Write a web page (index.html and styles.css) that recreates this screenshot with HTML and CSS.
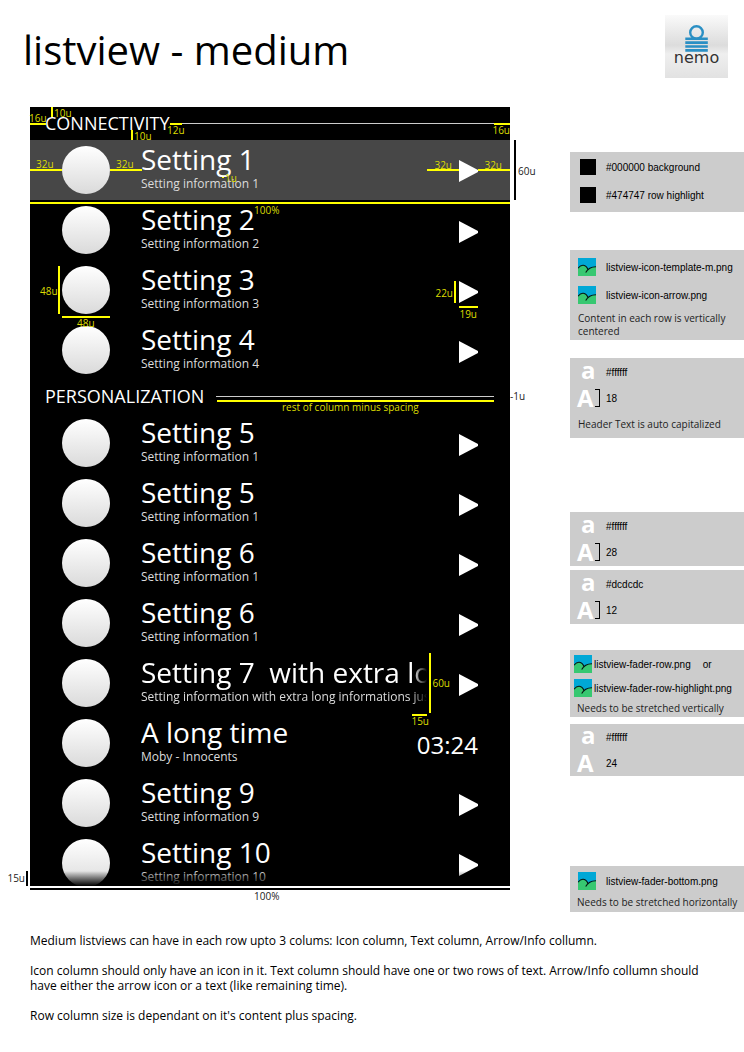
FILE: index.html
```html
<!DOCTYPE html>
<html lang="en">
<head>
<meta charset="utf-8">
<meta name="viewport" content="width=device-width, initial-scale=1">
<title>listview - medium</title>
<link rel="stylesheet" href="styles.css">
</head>
<body>
<svg class="defs" aria-hidden="true">
  <symbol id="picture" viewBox="0 0 18 18">
    <rect width="18" height="18" fill="#00a8d6"/>
    <path d="M0 10.500C3 6 8 6 10 12C12 10 15 8.700 18 8.700V18H0z" fill="#37c871"/>
    <path d="M0 10.300C3 6 8 6 10.200 12.200M7.700 14.600C9.500 11 13 8.700 18 8.700" fill="none" stroke="#06140f" stroke-width="1.100"/>
  </symbol>
  <symbol id="arrow" viewBox="0 0 19 22">
    <path d="M0 0L19 10V12L0 22z" fill="#fff"/>
  </symbol>
</svg>

<header class="page-header">
  <h1 class="page-title">listview - medium</h1>
  <svg class="logo" viewBox="0 0 63 63" role="img" aria-label="nemo">
    <defs>
      <linearGradient id="plate" x1="0" y1="0" x2="0" y2="1">
        <stop offset="0" stop-color="#fafafa"/>
        <stop offset=".48" stop-color="#dcdcdc"/>
        <stop offset=".62" stop-color="#efefef"/>
        <stop offset="1" stop-color="#e2e2e2"/>
      </linearGradient>
    </defs>
    <rect width="63" height="63" fill="url(#plate)"/>
    <circle cx="31.500" cy="17.500" r="6.300" fill="none" stroke="#2a8fc4" stroke-width="2.400"/>
    <path d="M20.300 23.700H42.800M20.300 27.600H42.800M20.300 31.500H42.800M20.300 35.400H42.800" stroke="#2a8fc4" stroke-width="2.600"/>
    <text class="logo-word" x="31.500" y="48" text-anchor="middle">nemo</text>
  </svg>
</header>

<main class="board">
  <section class="listview">
    <div class="section">
      <h2 class="section-title">CONNECTIVITY</h2><span class="rule"></span>
      <i class="bar h1-tick-top"></i><span class="note h1-top">10u</span>
      <i class="bar h1-line-left"></i><span class="note h1-left">16u</span>
      <i class="bar h1-line-gap"></i><span class="note h1-gap">12u</span>
      <i class="bar h1-tick-bottom"></i><span class="note h1-bottom">10u</span>
      <i class="bar h1-line-right"></i><span class="note h1-right">16u</span>
    </div>
    <div class="row highlight">
      <span class="icon"></span>
      <div class="text"><div class="title">Setting 1</div><div class="info">Setting information 1</div></div>
      <svg class="arrow"><use href="#arrow"/></svg>
      <i class="bar r1-line-a"></i><span class="note r1-a">32u</span>
      <i class="bar r1-line-b"></i><span class="note r1-b">32u</span>
      <i class="bar r1-line-c"></i><span class="note r1-c">32u</span>
      <i class="bar r1-line-d"></i><span class="note r1-d">32u</span>
      <i class="bar r1-dot"></i><span class="note r1-one">1u</span>
      <i class="bar r1-line-full"></i><span class="note r1-full">100%</span>
      <i class="bar dark r1-height"></i><span class="note dark-note r1-height-note">60u</span>
    </div>
    <div class="row">
      <span class="icon"></span>
      <div class="text"><div class="title">Setting 2</div><div class="info">Setting information 2</div></div>
      <svg class="arrow"><use href="#arrow"/></svg>
    </div>
    <div class="row">
      <span class="icon"></span>
      <div class="text"><div class="title">Setting 3</div><div class="info">Setting information 3</div></div>
      <svg class="arrow"><use href="#arrow"/></svg>
      <i class="bar r3-icon-h"></i><span class="note r3-icon-h-note">48u</span>
      <i class="bar r3-icon-w"></i><span class="note r3-icon-w-note">48u</span>
      <i class="bar r3-arrow-h"></i><span class="note r3-arrow-h-note">22u</span>
      <i class="bar r3-arrow-w"></i><span class="note r3-arrow-w-note">19u</span>
    </div>
    <div class="row">
      <span class="icon"></span>
      <div class="text"><div class="title">Setting 4</div><div class="info">Setting information 4</div></div>
      <svg class="arrow"><use href="#arrow"/></svg>
    </div>
    <div class="section">
      <h2 class="section-title">PERSONALIZATION</h2><span class="rule"></span>
      <i class="bar h2-line"></i><span class="note h2-rest">rest of column minus spacing</span>
      <span class="note dark-note h2-one">-1u</span>
    </div>
    <div class="row">
      <span class="icon"></span>
      <div class="text"><div class="title">Setting 5</div><div class="info">Setting information 1</div></div>
      <svg class="arrow"><use href="#arrow"/></svg>
    </div>
    <div class="row">
      <span class="icon"></span>
      <div class="text"><div class="title">Setting 5</div><div class="info">Setting information 1</div></div>
      <svg class="arrow"><use href="#arrow"/></svg>
    </div>
    <div class="row">
      <span class="icon"></span>
      <div class="text"><div class="title">Setting 6</div><div class="info">Setting information 1</div></div>
      <svg class="arrow"><use href="#arrow"/></svg>
    </div>
    <div class="row">
      <span class="icon"></span>
      <div class="text"><div class="title">Setting 6</div><div class="info">Setting information 1</div></div>
      <svg class="arrow"><use href="#arrow"/></svg>
    </div>
    <div class="row">
      <span class="icon"></span>
      <div class="text fade"><div class="title">Setting 7  with extra lo</div><div class="info">Setting information with extra long informations jus</div></div>
      <svg class="arrow"><use href="#arrow"/></svg>
      <i class="bar r7-height"></i><span class="note r7-height-note">60u</span>
      <i class="bar r7-fade"></i><span class="note r7-fade-note">15u</span>
    </div>
    <div class="row">
      <span class="icon"></span>
      <div class="text"><div class="title">A long time</div><div class="info">Moby - Innocents</div></div>
      <time class="remaining">03:24</time>
    </div>
    <div class="row">
      <span class="icon"></span>
      <div class="text"><div class="title">Setting 9</div><div class="info">Setting information 9</div></div>
      <svg class="arrow"><use href="#arrow"/></svg>
    </div>
    <div class="row last">
      <span class="icon"></span>
      <div class="text"><div class="title">Setting 10</div><div class="info">Setting information 10</div></div>
      <svg class="arrow"><use href="#arrow"/></svg>
    </div>
    <i class="bar dark list-fade"></i><span class="note dark-note list-fade-note">15u</span>
    <i class="bar dark list-width"></i><span class="note dark-note list-width-note">100%</span>
  </section>

  <aside class="specs">
    <div class="panel">
      <div class="spec"><span class="swatch"></span><span>#000000 background</span></div>
      <div class="spec"><span class="swatch"></span><span>#474747 row highlight</span></div>
    </div>
    <div class="panel files">
      <div class="spec"><svg class="picture"><use href="#picture"/></svg><span>listview-icon-template-m.png</span></div>
      <div class="spec"><svg class="picture"><use href="#picture"/></svg><span>listview-icon-arrow.png</span></div>
      <p class="remark">Content in each row is vertically centered</p>
    </div>
    <div class="panel type header-type">
      <div class="spec"><span class="glyph lower">a</span><span>#ffffff</span></div>
      <div class="spec"><span class="glyph">A<i class="bracket"></i></span><span>18</span></div>
      <p class="remark">Header Text is auto capitalized</p>
    </div>
    <div class="panel type title-type">
      <div class="spec"><span class="glyph lower">a</span><span>#ffffff</span></div>
      <div class="spec"><span class="glyph">A<i class="bracket"></i></span><span>28</span></div>
    </div>
    <div class="panel type info-type">
      <div class="spec"><span class="glyph lower">a</span><span>#dcdcdc</span></div>
      <div class="spec"><span class="glyph">A<i class="bracket"></i></span><span>12</span></div>
    </div>
    <div class="panel faders">
      <div class="spec"><svg class="picture"><use href="#picture"/></svg><span>listview-fader-row.png</span><span class="or">or</span></div>
      <div class="spec"><svg class="picture"><use href="#picture"/></svg><span>listview-fader-row-highlight.png</span></div>
      <p class="remark">Needs to be stretched vertically</p>
    </div>
    <div class="panel type time-type">
      <div class="spec"><span class="glyph lower">a</span><span>#ffffff</span></div>
      <div class="spec"><span class="glyph">A</span><span>24</span></div>
    </div>
    <div class="panel bottom-fader">
      <div class="spec"><svg class="picture"><use href="#picture"/></svg><span>listview-fader-bottom.png</span></div>
      <p class="remark">Needs to be stretched horizontally</p>
    </div>
  </aside>
</main>

<section class="description">
  <p>Medium listviews can have in each row upto 3 colums: Icon column, Text column, Arrow/Info collumn.</p>
  <p>Icon column should only have an icon in it. Text column should have one or two rows of text. Arrow/Info collumn should have either the arrow icon or a text (like remaining time).</p>
  <p>Row column size is dependant on it's content plus spacing.</p>
</section>
</body>
</html>
```
FILE: styles.css
```css
* { box-sizing: border-box; }

body {
  margin: 0;
  background: #fff;
  color: #000;
  font-family: "Open Sans", "Noto Sans", sans-serif;
}

h1, h2, p { margin: 0; font-weight: 400; }
.defs { display: none; }

.page-header {
  display: flex;
  justify-content: space-between;
  align-items: flex-start;
  padding: 15px 16px 29px 23px;
}
.page-title { padding-top: 8px; font-size: 40px; line-height: 54px; }
.logo { width: 63px; height: 63px; }
.logo-word { font-family: "DejaVu Sans", sans-serif; font-size: 16px; fill: #333; }

.board {
  display: grid;
  grid-template-columns: minmax(0, 480px) minmax(174px, 1fr);
  gap: 60px;
  align-items: start;
  padding-left: 30px;
}

/* List */
.listview { position: relative; background: #000; color: #fff; }

.section {
  position: relative;
  display: flex;
  align-items: center;
  gap: 12px;
  height: 33px;
  padding: 0 16px 0 15px;
}
.section-title { font-size: 18px; line-height: 25px; }
.rule { flex: 1; height: 1px; background: #ccc; }

.row {
  position: relative;
  display: grid;
  grid-template-columns: 48px minmax(0, 1fr) auto;
  column-gap: 32px;
  height: 60px;
  padding: 0 32px;
}
.highlight { background: #474747; }
.icon {
  align-self: start;
  height: 48px;
  margin-top: 6px;
  border-radius: 50%;
  background: linear-gradient(#fff, #dadada);
}
.text { margin-left: -1px; padding-top: 3px; white-space: pre; overflow: hidden; }
.title { font-size: 28px; line-height: 32px; }
.info { font-size: 12px; line-height: 18px; color: #dcdcdc; }
.fade { mask-image: linear-gradient(to left, transparent, #000 15px); }
.arrow { width: 19px; height: 22px; margin-top: 21px; }
.highlight .arrow { margin-top: 20px; z-index: 2; }
.remaining { padding-top: 16px; font-size: 24px; line-height: 32px; }
.last { height: 53px; overflow: hidden; }
.last::after {
  content: "";
  position: absolute;
  inset: auto 0 0 0;
  height: 15px;
  background: linear-gradient(transparent, #000);
}

/* Measurements laid over the list */
.bar { position: absolute; z-index: 1; width: 2px; height: 2px; background: #ff0; }
.note {
  position: absolute;
  z-index: 1;
  font-size: 10px;
  line-height: 14px;
  white-space: nowrap;
  color: #dddd00;
}
.dark { background: #000; }
.dark-note { color: #222; }

.h1-tick-top { left: 21px; top: 0; height: 10px; }
.h1-top { left: 24px; top: -1px; }
.h1-line-left { left: 0; top: 16px; width: 16px; }
.h1-left { left: -1px; top: 4px; }
.h1-line-gap { left: 140px; top: 16px; width: 12px; }
.h1-gap { left: 137px; top: 16px; }
.h1-tick-bottom { left: 101px; top: 23px; height: 10px; }
.h1-bottom { left: 104px; top: 22px; }
.h1-line-right { right: 0; top: 16px; width: 16px; }
.h1-right { right: 0; top: 16px; }

.r1-line-a { left: 0; top: 29px; width: 32px; }
.r1-a { left: 6px; top: 17px; }
.r1-line-b { left: 80px; top: 29px; width: 32px; }
.r1-b { left: 86px; top: 17px; }
.r1-line-c { right: 51px; top: 29px; width: 32px; }
.r1-c { right: 58px; top: 18px; }
.r1-line-d { right: 0; top: 29px; width: 32px; }
.r1-d { right: 8px; top: 18px; }
.r1-dot { left: 192px; top: 37px; height: 1px; }
.r1-one { left: 195px; top: 31px; }
.r1-line-full { left: 0; top: 62px; width: 100%; }
.r1-full { left: 224px; top: 63px; }
.r1-height { right: -6px; top: 0; height: 60px; }
.r1-height-note { left: calc(100% + 8px); top: 24px; }

.r3-icon-h { left: 28px; top: 6px; height: 48px; }
.r3-icon-h-note { left: 10px; top: 24px; }
.r3-icon-w { left: 32px; top: 56px; width: 48px; }
.r3-icon-w-note { left: 47px; top: 56px; }
.r3-arrow-h { right: 54px; top: 21px; height: 22px; }
.r3-arrow-h-note { right: 57px; top: 26px; }
.r3-arrow-w { right: 32px; top: 46px; width: 19px; }
.r3-arrow-w-note { right: 33px; top: 47px; }

.h2-line { left: 187px; right: 16px; top: 20px; width: auto; }
.h2-rest { left: 252px; top: 20px; }
.h2-one { left: 100%; top: 9px; }

.r7-height { right: 79px; top: 0; height: 60px; }
.r7-height-note { right: 60px; top: 23px; }
.r7-fade { right: 83px; top: 61px; width: 15px; }
.r7-fade-note { right: 81px; top: 61px; }

.list-fade { left: -4px; bottom: 0; height: 15px; }
.list-fade-note { right: calc(100% + 5px); bottom: 1px; }
.list-width { left: 0; bottom: -4px; width: 100%; }
.list-width-note { left: 224px; bottom: -17px; }

/* Specification panels */
.specs {
  display: flex;
  flex-direction: column;
  padding-top: 45px;
  font-family: "Liberation Sans", Arial, sans-serif;
  font-size: 10px;
}
.panel { padding: 1px 0 3px; background: #ccc; }
.spec {
  display: grid;
  grid-template-columns: 28px 1fr;
  align-items: center;
  height: 28px;
  padding-left: 8px;
}
.swatch { width: 16px; height: 16px; margin-left: 2px; background: #000; }
.picture { width: 18px; height: 18px; }
.remark {
  padding: 0 4px 0 8px;
  font-family: "Open Sans", "Noto Sans", sans-serif;
  line-height: 13px;
  color: #222;
}

.files { margin-top: 38px; padding: 3px 0 2px; }
.files .remark { padding-top: 3px; }

.type { padding: 1px 0; }
.type .spec { height: 26px; padding-left: 7px; grid-template-columns: 29px 1fr; }
.glyph {
  display: flex;
  align-items: center;
  gap: 1px;
  font: 700 24px/26px "Open Sans", "Noto Sans", sans-serif;
  color: #fff;
}
.lower { align-self: start; padding-left: 4px; line-height: 22px; }
.bracket { width: 5px; height: 18px; border: 1px solid #000; border-left: 0; }

.header-type { margin-top: 18px; }
.header-type .remark { padding-top: 7px; padding-bottom: 6px; }
.title-type { margin-top: 74px; }
.info-type { margin-top: 4px; }
.faders { margin-top: 26px; padding: 2px 0; }
.faders .spec { height: 24px; padding-left: 4px; grid-template-columns: 20px auto 1fr; }
.faders .or { padding-left: 12px; }
.faders .remark { padding-left: 7px; padding-top: 2px; }
.time-type { margin-top: 7px; padding: 0; }
.bottom-fader { margin-top: 90px; padding-bottom: 3px; }
.bottom-fader .remark { padding-top: 1px; padding-left: 7px; padding-right: 0; }

.description {
  display: flex;
  flex-direction: column;
  gap: 15px;
  padding: 21px 30px 29px;
  font-size: 12px;
  line-height: 15px;
}
```
